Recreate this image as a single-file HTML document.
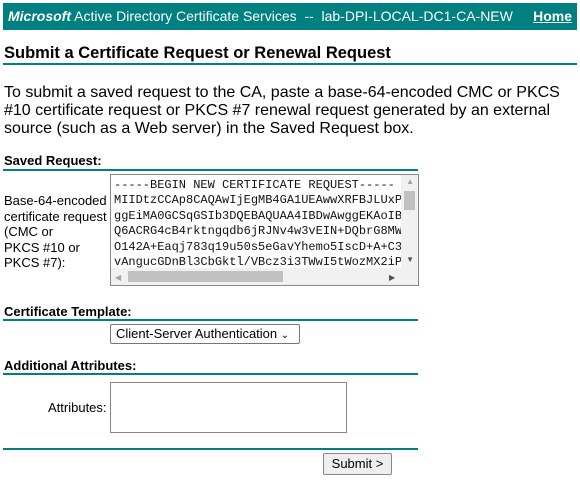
<!DOCTYPE html>
<html><head><meta charset="utf-8"><style>
*{margin:0;padding:0;box-sizing:border-box}
body{width:580px;height:487px;background:#fff;font-family:"Liberation Sans",Arial,sans-serif;color:#000;position:relative;overflow:hidden}
.a{position:absolute;white-space:nowrap}
.bar{left:3px;top:3px;width:574px;height:27px;background:#008080;color:#fff;font-size:14px;line-height:27px;padding-left:5px}
.hl{position:absolute;height:2px;background:#008080}
.h{font-weight:bold;font-size:13px}
.lbl{font-size:13px;line-height:15.5px}
.mono{font-family:"Liberation Mono","DejaVu Sans Mono",monospace;font-size:12px;line-height:15.4px;color:#111}
</style></head><body>
<div class="a bar"><b><i>Microsoft</i></b> Active Directory Certificate Services &nbsp;-- &nbsp;lab-DPI-LOCAL-DC1-CA-NEW<span style="position:absolute;right:5px;font-weight:bold;text-decoration:underline">Home</span></div>
<div class="a" style="left:4px;top:44px;font-size:16.5px;font-weight:bold">Submit a Certificate Request or Renewal Request</div>
<div class="hl" style="left:3px;top:63px;width:574px"></div>
<div class="a" style="left:4px;top:84px;font-size:16px;line-height:18px;white-space:normal;width:570px">To submit a saved request to the CA, paste a base-64-encoded CMC or PKCS #10 certificate request or PKCS #7 renewal request generated by an external source (such as a Web server) in the Saved Request box.</div>
<div class="a h" style="left:4px;top:153px">Saved Request:</div>
<div class="hl" style="left:3px;top:169px;width:415px"></div>
<div class="a lbl" style="left:4px;top:193px">Base-64-encoded<br>certificate request<br>(CMC or<br>PKCS #10 or<br>PKCS #7):</div>
<div class="a" style="left:110px;top:174px;width:309px;height:112px;border:1px solid #888;overflow:hidden">
 <div class="mono" style="position:absolute;left:3px;top:3px">-----BEGIN NEW CERTIFICATE REQUEST-----<br>MIIDtzCCAp8CAQAwIjEgMB4GA1UEAwwXRFBJLUxP<br>ggEiMA0GCSqGSIb3DQEBAQUAA4IBDwAwggEKAoIB<br>Q6ACRG4cB4rktngqdb6jRJNv4w3vEIN+DQbrG8MW<br>O142A+Eaqj783q19u50s5eGavYhemo5IscD+A+C3<br>vAngucGDnBl3CbGktl/VBcz3i3TWwI5tWozMX2iP</div>
 <div style="position:absolute;right:0;top:0;width:17px;height:110px;background:#f1f1f1"></div>
 <div style="position:absolute;right:3px;top:16px;width:11px;height:19px;background:#c1c1c1"></div>
 <div style="position:absolute;left:0;bottom:0;width:290px;height:17px;background:#f1f1f1"></div>
 <div style="position:absolute;left:17px;bottom:3px;width:155px;height:11px;background:#c1c1c1"></div>
 <div class="a" style="right:4px;top:2px;font-size:8px;color:#a3a3a3">▲</div>
 <div class="a" style="right:4px;top:80px;font-size:8px;color:#505050">▼</div>
 <div class="a" style="left:4px;bottom:3px;font-size:8px;color:#a3a3a3">◀</div>
 <div class="a" style="left:278px;bottom:3px;font-size:8px;color:#505050">▶</div>
</div>
<div class="a h" style="left:4px;top:304px">Certificate Template:</div>
<div class="hl" style="left:3px;top:319px;width:415px"></div>
<div class="a" style="left:110px;top:324px;width:190px;height:20px;border:1px solid #767676;border-radius:2px;font-size:13px;line-height:18px;padding-left:5px">Client-Server Authentication <span style="font-size:10px">⌄</span></div>
<div class="a h" style="left:4px;top:358px">Additional Attributes:</div>
<div class="hl" style="left:3px;top:373px;width:415px"></div>
<div class="a lbl" style="left:48px;top:400px">Attributes:</div>
<div class="a" style="left:110px;top:382px;width:237px;height:51px;border:1px solid #888"></div>
<div class="hl" style="left:3px;top:448px;width:415px"></div>
<div class="a" style="left:323px;top:453px;width:69px;height:22px;border:1px solid #888;border-radius:2px;background:#efefef;font-size:13px;line-height:20px;text-align:center">Submit &gt;</div>
</body></html>
